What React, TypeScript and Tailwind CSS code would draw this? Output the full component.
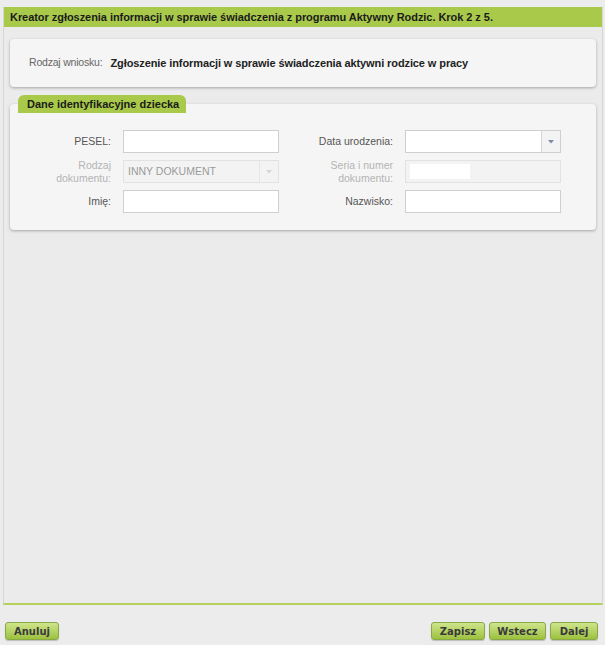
import React from 'react';

const font = { fontFamily: '"Liberation Sans", Arial, sans-serif' };

function Field({ label, disabled, select, value, twoLine }: { label: React.ReactNode; disabled?: boolean; select?: boolean; value?: string; twoLine?: boolean }) {
  return (
    <div className="flex items-center h-[23px]">
      <div
        className={`w-[103px] pr-[12px] text-right text-[10.5px] leading-[13px] ${disabled ? 'text-[#b4b4b4]' : 'text-[#555]'}`}
      >
        {label}
      </div>
      <div
        className={`flex h-[23px] w-[156px] border ${disabled ? 'border-[#e2e2e2] bg-[#f3f3f3]' : 'border-[#cfcfcf] bg-white'}`}
      >
        <div className={`flex-1 flex items-center px-[4px] text-[10.5px] ${disabled ? 'text-[#9a9a9a]' : 'text-[#333]'}`}>
          {twoLine ? <div className="w-[60px] h-[15px] bg-white" /> : value}
        </div>
        {select && (
          <div className={`w-[19px] flex items-center justify-center border-l ${disabled ? 'border-[#e6e6e6]' : 'border-[#d6d6d6] bg-[#f3f3f3]'}`}>
            <svg width="6" height="4" viewBox="0 0 6 4">
              <path d="M0 0h6L3 3.5z" fill={disabled ? '#d0d4dc' : '#7d8aa8'} />
            </svg>
          </div>
        )}
      </div>
    </div>
  );
}

export default function App() {
  return (
    <div className="w-[605px] h-[645px] bg-[#ececec] relative overflow-hidden" style={font}>
      <div className="ml-[3px] mt-[7px] w-[600px] h-[598px] flex flex-col border-x border-[#d6d6d6] border-b-2 border-b-[#b5d25f] bg-[#ebebeb]">
        <div className="h-[20px] bg-[#a8c94a] flex items-center px-[6px] text-[11px] font-bold text-[#1b1b1b] tracking-[-0.05px] whitespace-nowrap">
          Kreator zgłoszenia informacji w sprawie świadczenia z programu Aktywny Rodzic. Krok 2 z 5.
        </div>
        <div className="px-[6px] pt-[12px]">
          <div className="h-[48px] rounded-[4px] bg-[#f5f5f5] shadow-[0_1px_3px_rgba(0,0,0,0.3)] flex items-center pl-[19px] gap-[8px]">
            <span className="text-[10.5px] text-[#666] tracking-[-0.2px]">Rodzaj wniosku:</span>
            <span className="text-[11px] font-bold text-[#222] tracking-[-0.1px]">
              Zgłoszenie informacji w sprawie świadczenia aktywni rodzice w pracy
            </span>
          </div>
          <div className="mt-[8px] flex">
            <div className="ml-[8px] h-[18px] w-[168px] rounded-t-[6px] bg-[#a8c94a] flex items-center px-[9px] text-[11px] font-bold text-[#1b1b1b] whitespace-nowrap">
              Dane identyfikacyjne dziecka
            </div>
          </div>
          <div className="-mt-[9px] h-[126px] rounded-[4px] bg-[#f5f5f5] shadow-[0_1px_3px_rgba(0,0,0,0.3)] pt-[26px] pl-[10px]">
            <div className="grid grid-cols-[282px_282px] gap-y-[7px]">
              <Field label="PESEL:" />
              <Field label="Data urodzenia:" select />
              <Field label={<>Rodzaj<br />dokumentu:</>} disabled select value="INNY DOKUMENT" />
              <Field label={<>Seria i numer<br />dokumentu:</>} disabled twoLine />
              <Field label="Imię:" />
              <Field label="Nazwisko:" />
            </div>
          </div>
        </div>
      </div>
      <div className="flex items-center justify-between px-[5px] mt-[17px]">
        <Btn label="Anuluj" w="w-[54px]" />
        <div className="flex gap-[4px] mr-[2px]">
          <Btn label="Zapisz" w="w-[54px]" />
          <Btn label="Wstecz" w="w-[57px]" />
          <Btn label="Dalej" w="w-[48px]" />
        </div>
      </div>
    </div>
  );
}

function Btn({ label, w }: { label: string; w: string }) {
  return (
    <div
      className={`${w} h-[18px] rounded-[3px] border border-[#8aa848] bg-gradient-to-b from-[#cfe58a] to-[#9cc13c] flex items-center justify-center text-[10px] font-bold text-[#3a3a3a] shadow-[0_1px_1px_rgba(0,0,0,0.2)]`}
      style={{ fontFamily: '"DejaVu Sans", Verdana, sans-serif' }}
    >
      {label}
    </div>
  );
}
